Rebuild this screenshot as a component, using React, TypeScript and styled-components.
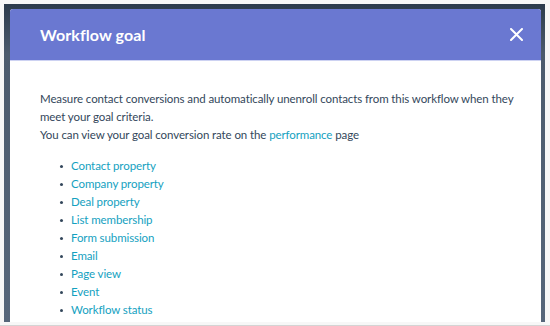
import React from "react";
import styled, { createGlobalStyle } from "styled-components";

const GlobalStyle = createGlobalStyle`
  html, body {
    margin: 0;
    padding: 0;
    background: #f7f7f7;
  }
  body {
    font-family: Lato, "Open Sans", "Liberation Sans", sans-serif;
  }
`;

const Page = styled.div`
  width: 550px;
  height: 326px;
  overflow: hidden;
  box-sizing: border-box;
  padding: 4px 5px 0 4px;
  border-bottom: 1px solid #d4d4d4;
`;

const Backdrop = styled.div`
  height: 318px;
  box-sizing: border-box;
  padding: 5px 4px 0 6px;
  background: linear-gradient(#2c3b4c 0, #4c5b6d 50px, #56667a 100%);
`;

const Dialog = styled.div`
  height: 100%;
  background: #ffffff;
  border-radius: 3px 3px 0 0;
  overflow: hidden;
`;

const Header = styled.div`
  height: 51px;
  display: flex;
  align-items: center;
  justify-content: space-between;
  padding: 0 17px 0 30px;
  background: #6a78d1;
  border-bottom: 1px solid #cdd2f2;
`;

const Title = styled.h2`
  margin: 0;
  color: #ffffff;
  font-size: 16px;
  font-weight: 700;
  letter-spacing: 0.1px;
`;

const CloseBtn = styled.button`
  width: 16px;
  height: 16px;
  padding: 0;
  border: 0;
  background: none;
  display: flex;
  align-items: center;
  justify-content: center;
  cursor: pointer;
`;

const Body = styled.div`
  padding: 29px 30px 0 30px;
  color: #33475b;
  font-size: 11.5px;
  line-height: 18px;
  letter-spacing: -0.1px;
`;

const Paragraph = styled.p`
  margin: 0;
  width: 474px;
`;

const Link = styled.a`
  color: #14a1bf;
  text-decoration: none;
`;

const GoalList = styled.ul`
  margin: 13px 0 0 0;
  padding: 0 0 0 31px;
  list-style: none;
`;

const GoalItem = styled.li`
  position: relative;
  line-height: 18px;
  &::before {
    content: "";
    position: absolute;
    left: -11px;
    top: 8px;
    width: 3px;
    height: 3px;
    border-radius: 50%;
    background: #33475b;
  }
`;

const goals = [
  "Contact property",
  "Company property",
  "Deal property",
  "List membership",
  "Form submission",
  "Email",
  "Page view",
  "Event",
  "Workflow status",
];

export default function App() {
  return (
    <>
      <GlobalStyle />
      <Page>
        <Backdrop>
          <Dialog>
            <Header>
              <Title>Workflow goal</Title>
              <CloseBtn aria-label="Close">
                <svg width="13" height="13" viewBox="0 0 13 13">
                  <path
                    d="M1 1 L12 12 M12 1 L1 12"
                    stroke="#ffffff"
                    strokeWidth="2"
                    strokeLinecap="round"
                  />
                </svg>
              </CloseBtn>
            </Header>
            <Body>
              <Paragraph>
                Measure contact conversions and automatically unenroll contacts
                from this workflow when they meet your goal criteria.
              </Paragraph>
              <Paragraph>
                You can view your goal conversion rate on the{" "}
                <Link href="#">performance</Link> page
              </Paragraph>
              <GoalList>
                {goals.map((g) => (
                  <GoalItem key={g}>
                    <Link href="#">{g}</Link>
                  </GoalItem>
                ))}
              </GoalList>
            </Body>
          </Dialog>
        </Backdrop>
      </Page>
    </>
  );
}
